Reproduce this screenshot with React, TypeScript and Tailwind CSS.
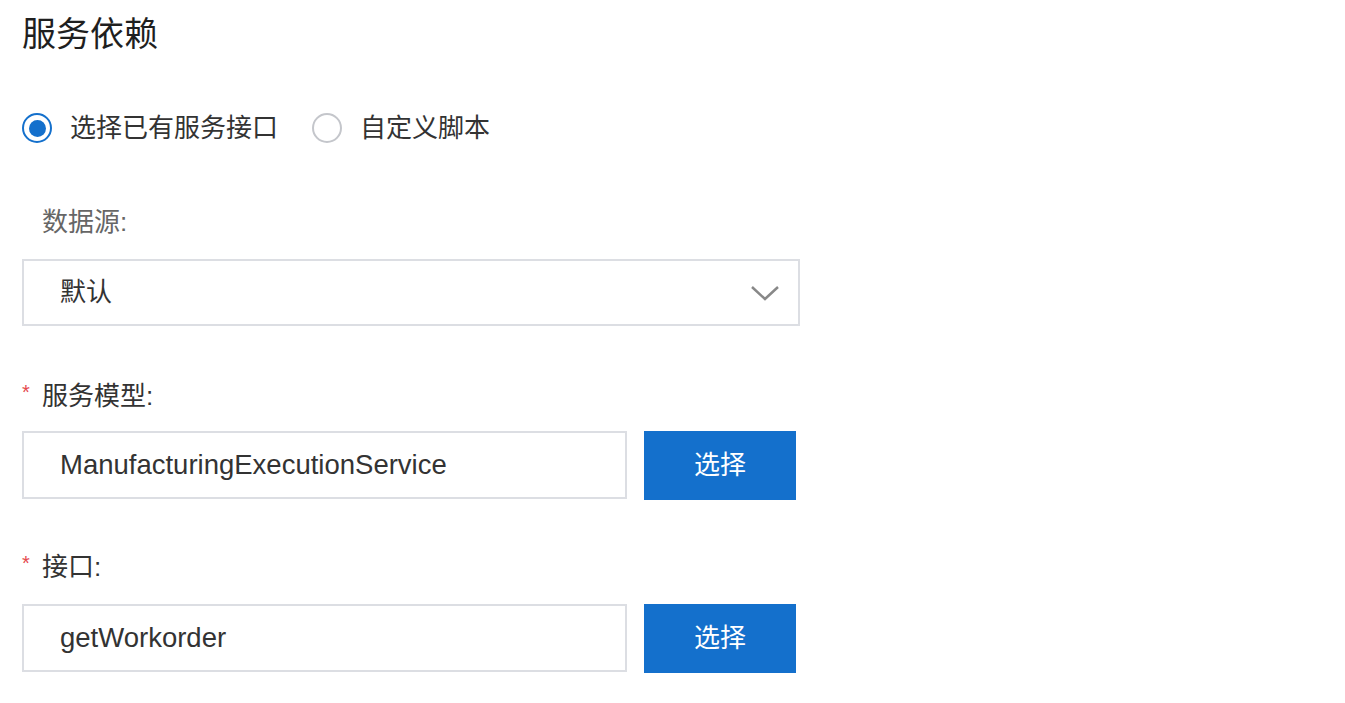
import React, { useState } from 'react';

const font = { fontFamily: '"Liberation Sans", "Noto Sans CJK SC", sans-serif' };

const Radio = ({ checked, label, onClick }: { checked: boolean; label: string; onClick: () => void }) => (
    <label onClick={onClick} className="flex items-center gap-[18px] cursor-pointer">
        <span
            className={`w-[30px] h-[30px] rounded-full border-2 flex items-center justify-center bg-white ${
                checked ? 'border-[#1470cc]' : 'border-[#c4c6cb]'
            }`}
        >
            {checked && <span className="w-[17px] h-[17px] rounded-full bg-[#1470cc]" />}
        </span>
        <span className="text-[26px] text-[#333]">{label}</span>
    </label>
);

const FieldLabel = ({ text, required }: { text: string; required?: boolean }) => (
    <div className="flex items-center h-[36px] text-[26px] text-[#333]">
        {required && <span className="text-[#e5484d] text-[20px] w-[20px] -mt-[8px]">*</span>}
        <span>{text}:</span>
    </div>
);

const PickRow = ({ value }: { value: string }) => (
    <div className="flex gap-[17px]">
        <div className="w-[605px] h-[68px] border-2 border-[#dcdee3] flex items-center pl-[36px] text-[27.5px] text-[#333] bg-white">
            {value}
        </div>
        <button className="w-[152px] h-[69px] bg-[#1470cc] text-white text-[26px]">选择</button>
    </div>
);

export default function App() {
    const [mode, setMode] = useState<'existing' | 'script'>('existing');

    return (
        <div className="w-[1345px] h-[703px] bg-white pl-[22px] pt-[12px]" style={font}>
            <h1 className="text-[34px] text-[#1f1f1f] leading-[44px]">服务依赖</h1>

            <div className="flex items-center gap-[34px] mt-[52px] h-[40px]">
                <Radio checked={mode === 'existing'} label="选择已有服务接口" onClick={() => setMode('existing')} />
                <Radio checked={mode === 'script'} label="自定义脚本" onClick={() => setMode('script')} />
            </div>

            <div className="mt-[56px] pl-[20px] h-[36px] flex items-center text-[26px] text-[#666]">数据源:</div>

            <div className="mt-[19px] w-[778px] h-[67px] border-2 border-[#dcdee3] flex items-center justify-between pl-[36px] pr-[18px]">
                <span className="text-[26px] text-[#333]">默认</span>
                <svg width="30" height="16" viewBox="0 0 30 16" fill="none">
                    <path d="M2 2 L15 14 L28 2" stroke="#888" strokeWidth="2.5" />
                </svg>
            </div>

            <div className="mt-[52px]">
                <FieldLabel text="服务模型" required />
            </div>
            <div className="mt-[17px]">
                <PickRow value="ManufacturingExecutionService" />
            </div>

            <div className="mt-[49px]">
                <FieldLabel text="接口" required />
            </div>
            <div className="mt-[19px]">
                <PickRow value="getWorkorder" />
            </div>
        </div>
    );
}
